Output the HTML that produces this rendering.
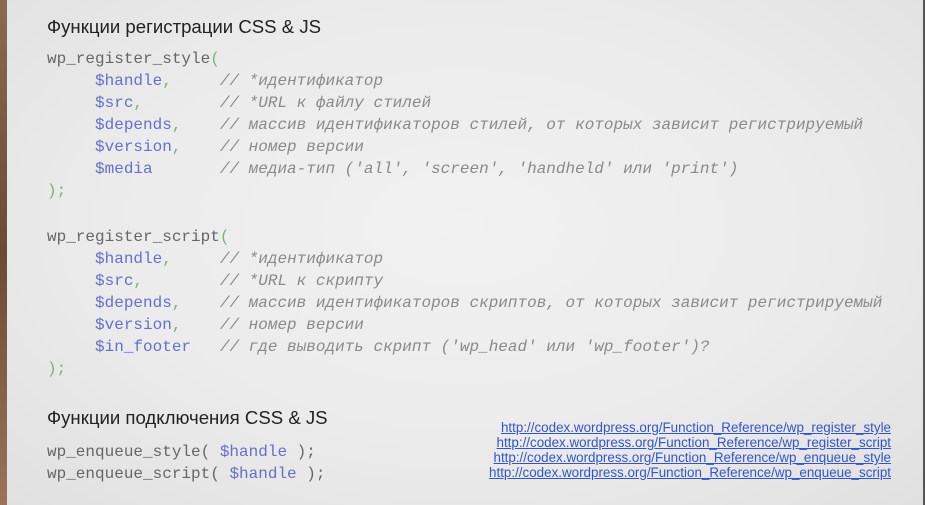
<!DOCTYPE html>
<html><head><meta charset="utf-8"><style>
html,body{margin:0;padding:0}
body{width:925px;height:505px;overflow:hidden;position:relative;
background:radial-gradient(ellipse at 50% 45%,#f1f1f1 0%,#ebebeb 55%,#e0e0e0 100%);
font-family:"Liberation Sans",sans-serif}
.l{position:absolute;left:0;top:0;width:7px;height:505px;background:linear-gradient(#8a6a50,#6b4a35 50%,#9a7458)}
.r{position:absolute;right:0;top:0;width:2px;height:505px;background:#555}
h1{position:absolute;left:47px;margin:0;font-weight:normal;font-size:18.6px;color:#222;line-height:22px}
pre{position:absolute;left:47px;margin:0;font-family:"Liberation Mono",monospace;font-size:16px;line-height:22px;color:#666}
.v{color:#6470cc}.p{color:#7ab07a}.c{color:#8a8a8a;font-style:italic}
.links{position:absolute;right:34px;top:420px;text-align:right;font-size:13.4px;line-height:15px}
.links a{color:#3355cc;text-decoration:underline;display:block}
</style></head><body>
<div class="l"></div><div class="r"></div>
<h1 style="top:16px">Функции регистрации CSS &amp; JS</h1>
<pre style="top:48px">wp_register_style<span class="p">(</span>
     <span class="v">$handle</span><span class="p">,</span>     <span class="c">// *идентификатор</span>
     <span class="v">$src</span><span class="p">,</span>        <span class="c">// *URL к файлу стилей</span>
     <span class="v">$depends</span><span class="p">,</span>    <span class="c">// массив идентификаторов стилей, от которых зависит регистрируемый</span>
     <span class="v">$version</span><span class="p">,</span>    <span class="c">// номер версии</span>
     <span class="v">$media</span>       <span class="c">// медиа-тип ('all', 'screen', 'handheld' или 'print')</span>
<span class="p">);</span></pre>
<pre style="top:226px">wp_register_script<span class="p">(</span>
     <span class="v">$handle</span><span class="p">,</span>     <span class="c">// *идентификатор</span>
     <span class="v">$src</span><span class="p">,</span>        <span class="c">// *URL к скрипту</span>
     <span class="v">$depends</span><span class="p">,</span>    <span class="c">// массив идентификаторов скриптов, от которых зависит регистрируемый</span>
     <span class="v">$version</span><span class="p">,</span>    <span class="c">// номер версии</span>
     <span class="v">$in_footer</span>   <span class="c">// где выводить скрипт ('wp_head' или 'wp_footer')?</span>
<span class="p">);</span></pre>
<h1 style="top:407px">Функции подключения CSS &amp; JS</h1>
<pre style="top:441px">wp_enqueue_style( <span class="v">$handle</span> );
wp_enqueue_script( <span class="v">$handle</span> );</pre>
<div class="links">
<a>http://codex.wordpress.org/Function_Reference/wp_register_style</a>
<a>http://codex.wordpress.org/Function_Reference/wp_register_script</a>
<a>http://codex.wordpress.org/Function_Reference/wp_enqueue_style</a>
<a>http://codex.wordpress.org/Function_Reference/wp_enqueue_script</a>
</div>
</body></html>
